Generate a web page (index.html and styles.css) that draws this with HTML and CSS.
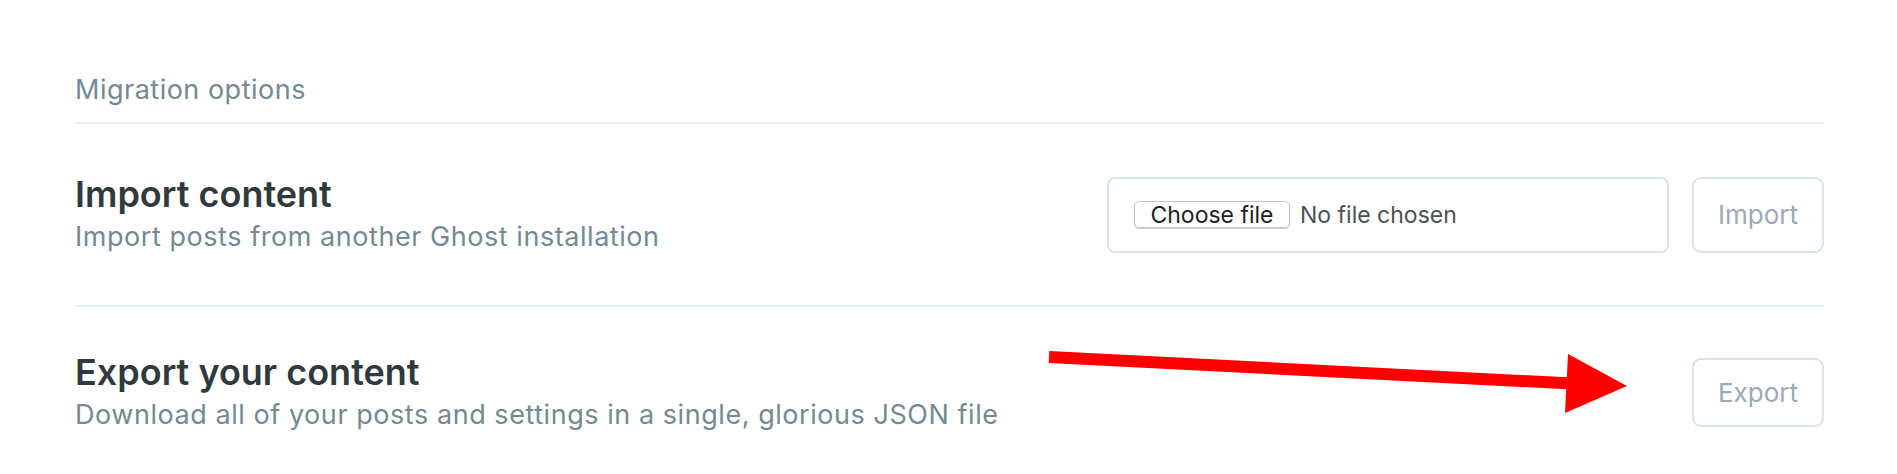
FILE: index.html
```html
<!DOCTYPE html>
<html lang="en">
<head>
<meta charset="utf-8">
<title>Labs - Migration options</title>
<link rel="stylesheet" href="styles.css">
</head>
<body>
<div class="page">
  <div class="section-header">Migration options</div>

  <div class="setting">
    <div class="setting-text">
      <h3 class="setting-title">Import content</h3>
      <p class="setting-desc">Import posts from another Ghost installation</p>
    </div>
    <div class="setting-action">
      <div class="file-box">
        <span class="choose-btn">Choose file</span>
        <span class="no-file">No file chosen</span>
      </div>
      <button class="btn btn-tall">Import</button>
    </div>
  </div>

  <div class="setting setting-last">
    <div class="setting-text">
      <h3 class="setting-title">Export your content</h3>
      <p class="setting-desc">Download all of your posts and settings in a single, glorious JSON file</p>
    </div>
    <div class="setting-action">
      <button class="btn">Export</button>
    </div>
  </div>

  <svg class="annotation-arrow" width="1897" height="474" viewBox="0 0 1897 474" aria-hidden="true">
    <line x1="1049" y1="357" x2="1572" y2="383.5" stroke="#ff0000" stroke-width="12"/>
    <polygon points="1568,354 1627,386 1565,413" fill="#ff0000"/>
  </svg>
</div>
</body>
</html>
```

FILE: styles.css
```css
html, body {
  margin: 0;
  padding: 0;
  background: #ffffff;
}

body {
  font-family: Inter, "Noto Sans", "Liberation Sans", sans-serif;
  -webkit-font-smoothing: antialiased;
}

.page {
  position: relative;
  padding: 0 73px 0 75px;
  height: 474px;
  overflow: hidden;
}

.section-header {
  padding-top: 74px;
  padding-bottom: 16px;
  font-size: 27px;
  line-height: 32px;
  color: #738a94;
  letter-spacing: 0.5px;
  border-bottom: 2px solid #e5eff5;
}

.setting {
  display: flex;
  align-items: center;
  justify-content: space-between;
  padding: 52px 0;
  border-bottom: 2px solid #e5eff5;
}

.setting-last {
  border-bottom: none;
  padding-top: 47px;
}

.setting-text {
  display: flex;
  flex-direction: column;
}

.setting-title {
  margin: 0;
  font-size: 36px;
  line-height: 36px;
  font-weight: 600;
  color: #30393d;
}

.setting-desc {
  margin: 9px 0 0;
  font-size: 27px;
  line-height: 32px;
  color: #738a94;
  letter-spacing: 0.55px;
}

.setting-action {
  display: flex;
  align-items: center;
  gap: 23px;
}

.file-box {
  box-sizing: border-box;
  width: 562px;
  height: 76px;
  border: 2px solid #dae3e8;
  border-radius: 8px;
  display: flex;
  align-items: center;
  padding-left: 25px;
  gap: 10px;
}

.choose-btn {
  box-sizing: border-box;
  width: 156px;
  height: 27px;
  display: flex;
  align-items: center;
  justify-content: center;
  border: 1px solid #c4c4c4;
  border-radius: 5px;
  background: #ffffff;
  box-shadow: 0 1px 1px rgba(0, 0, 0, 0.18);
  font-size: 23px;
  color: #1e1e1e;
}

.no-file {
  font-size: 23px;
  color: #4a5154;
}

.btn {
  box-sizing: border-box;
  width: 132px;
  height: 69px;
  border: 2px solid #dae3e8;
  border-radius: 9px;
  background: #ffffff;
  font-family: inherit;
  font-size: 26px;
  color: #9aabb4;
  padding: 0;
}

.btn-tall {
  height: 76px;
}

.annotation-arrow {
  position: absolute;
  left: 0;
  top: 0;
  pointer-events: none;
}
```
